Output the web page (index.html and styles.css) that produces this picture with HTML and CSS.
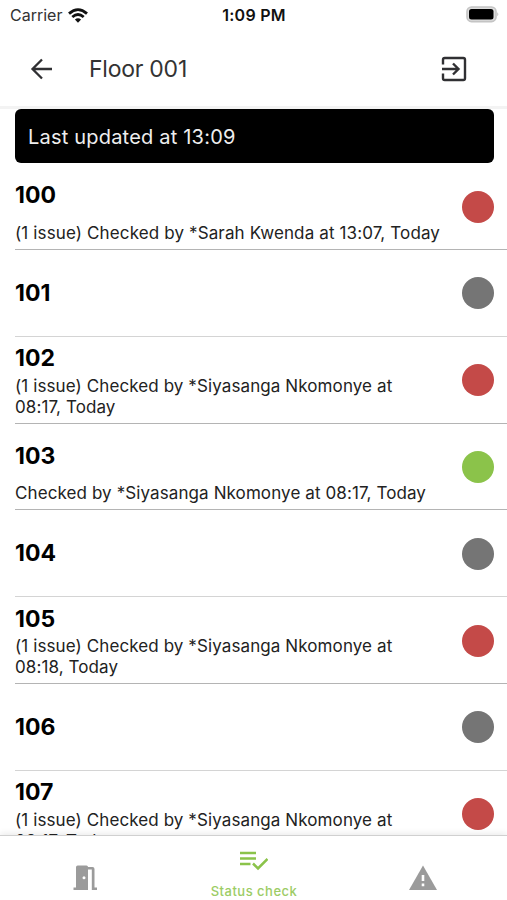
FILE: index.html
```html
<!DOCTYPE html>
<html lang="en">
<head>
<meta charset="utf-8">
<title>Floor 001</title>
<link rel="stylesheet" href="styles.css">
</head>
<body>
<div class="app">
  <div class="status-bar">
    <div class="carrier"><span>Carrier</span>
      <svg class="wifi" viewBox="0 0 20 15"><g fill="none" stroke="#111" stroke-width="2.8"><path d="M1 5.6Q10-2.4 19 5.6"/><path d="M4.3 9Q10 4 15.7 9"/></g><path d="M6.9 11.6Q10 9 13.1 11.6L10 14.8Z" fill="#111"/></svg>
    </div>
    <div class="clock">1:09 PM</div>
    <svg class="battery" viewBox="0 0 34 17"><rect x="1" y="1" width="29" height="14.6" rx="4.5" fill="#ddd" stroke="#c4c4c4" stroke-width="1.6"/><rect x="3" y="3" width="24.5" height="10.6" rx="2.5"/><path d="M31.3 6.2q2 2 0 4z" fill="#bcbcbc"/></svg>
  </div>
  <header class="header">
    <svg class="back" viewBox="0 0 24 24"><path d="M23 12H3.500M13 2.5L3.500 12l9.5 9.5" fill="none" stroke="#303033" stroke-width="2.3"/></svg>
    <h1>Floor 001</h1>
    <svg class="exit" viewBox="0 0 26 26"><path d="M2 8.5V3.7Q2 2 3.7 2H22.3Q24 2 24 3.7V22.3Q24 24 22.3 24H3.7Q2 24 2 22.3V17.5M1 13H17M12 7.5l5.5 5.5-5.5 5.5" fill="none" stroke="#303033" stroke-width="2.4"/></svg>
  </header>
  <main class="content">
    <div class="banner"><span>Last updated at 13:09</span></div>
    <div class="rows">
      <section class="row checked"><div class="info"><h2>100</h2><p class="wide">(1 issue) Checked by *Sarah Kwenda at 13:07, Today</p></div><i class="dot red"></i></section>
      <section class="row"><div class="info"><h2>101</h2></div><i class="dot"></i></section>
      <section class="row checked"><div class="info"><h2>102</h2><p>(1 issue) Checked by *Siyasanga Nkomonye at<br>08:17, Today</p></div><i class="dot red"></i></section>
      <section class="row checked"><div class="info"><h2>103</h2><p>Checked by *Siyasanga Nkomonye at 08:17, Today</p></div><i class="dot green"></i></section>
      <section class="row"><div class="info"><h2>104</h2></div><i class="dot"></i></section>
      <section class="row checked"><div class="info"><h2>105</h2><p>(1 issue) Checked by *Siyasanga Nkomonye at<br>08:18, Today</p></div><i class="dot red"></i></section>
      <section class="row"><div class="info"><h2>106</h2></div><i class="dot"></i></section>
      <section class="row checked"><div class="info"><h2>107</h2><p>(1 issue) Checked by *Siyasanga Nkomonye at<br>08:17, Today</p></div><i class="dot red"></i></section>
    </div>
  </main>
  <nav class="tabs">
    <div class="tab"><svg class="door" viewBox="0 0 24 25"><path fill="#9b9b9b" fill-rule="evenodd" d="M3 2.2Q3 .5 4.7.5H13.500Q15 .5 15 2H19.500Q21.500 2 21.500 4V22.5H24V25H18.800V4.500H15V25H.5V22.500H3ZM11 11.300a1.500 1.500 0 1 0 0 3 1.500 1.500 0 0 0 0-3Z"/></svg></div>
    <div class="tab active"><svg class="check" viewBox="0 0 28 20"><path d="M0 2H16M0 7.500H16M0 13H10.500M13 12.500l5 5 9.500-9.500" fill="none" stroke="#8bc34a" stroke-width="2.500"/></svg><span>Status check</span></div>
    <div class="tab"><svg class="warn" viewBox="0 0 28 25"><path fill="#9b9b9b" d="M14 .5L28 25H0Z"/><path d="M14 10v6M14 18.500v2.700" stroke="#fff" stroke-width="2.600"/></svg></div>
  </nav>
</div>
</body>
</html>
```
FILE: styles.css
```css
* { box-sizing: border-box; }
body { margin: 0; background: #fff; font-family: Inter, "Liberation Sans", sans-serif; color: #222; }
h1, h2, p { margin: 0; }
svg { display: block; flex: none; }
.app { width: 507px; height: 900px; display: flex; flex-direction: column; overflow: hidden; }
.status-bar { height: 30px; flex: none; display: grid; grid-template-columns: 1fr auto 1fr; align-items: center; padding: 0 7px 0 10px; }
.carrier { display: flex; align-items: center; gap: 6px; font-size: 16px; letter-spacing: 0; color: #333; }
.wifi { width: 20px; height: 15px; }
.clock { font-size: 16px; font-weight: 600; letter-spacing: .25px; color: #111; margin-left: -2px; }
.battery { width: 34px; height: 17px; justify-self: end; margin-bottom: 2px; }
.header { height: 79px; flex: none; display: flex; align-items: center; padding: 2px 40px 0 29px; border-bottom: 3px solid #f3f3f3; }
.back { width: 24px; height: 24px; }
.header h1 { flex: 1; margin-left: 36px; font-size: 23px; font-weight: 400; letter-spacing: -.25px; color: #333; }
.exit { width: 26px; height: 26px; }
.content { flex: 1; min-height: 0; overflow: hidden; }
.banner { height: 54px; margin: 0 13px 0 15px; padding: 1px 0 0 13px; border-radius: 6px; background: #000; color: #eee; display: flex; align-items: center; font-size: 20px; letter-spacing: .2px; }
.rows { padding: .3px 0 0 15px; }
.row { height: 86.8px; display: flex; align-items: center; justify-content: space-between; padding-right: 13px; border-bottom: 1px solid #d4d4d4; }
.row.checked { border-bottom-color: #b4b4b4; }
.info { height: 100%; display: flex; flex-direction: column; }
.checked .info { padding: 4px 0 5px; }
.info h2 { flex: 1; display: flex; align-items: center; font-size: 23px; line-height: 26px; font-weight: 700; color: #000; }
.info p { font-size: 17px; line-height: 21px; letter-spacing: .1px; white-space: nowrap; }
.info .wide { letter-spacing: .13px; }
.dot { width: 32px; height: 32px; border-radius: 50%; background: #757575; flex: none; margin-top: 1px; }
.red { background: #c44a48; }
.green { background: #8bc34a; }
.tabs { height: 65px; flex: none; display: grid; grid-template-columns: repeat(3, 1fr); background: #fff; border-top: 1px solid #d0d0d0; box-shadow: 0 -2px 6px rgba(0,0,0,.08); z-index: 1; }
.tab { display: flex; flex-direction: column; align-items: center; padding-top: 29px; }
.tab.active { padding-top: 15px; color: #9ccc65; }
.tab span { margin: 12px 0 0 1px; font-size: 13px; line-height: 17px; font-weight: 500; letter-spacing: .5px; }
.door { width: 24px; height: 25px; }
.check { width: 28px; height: 20px; }
.warn { width: 28px; height: 25px; }
```
